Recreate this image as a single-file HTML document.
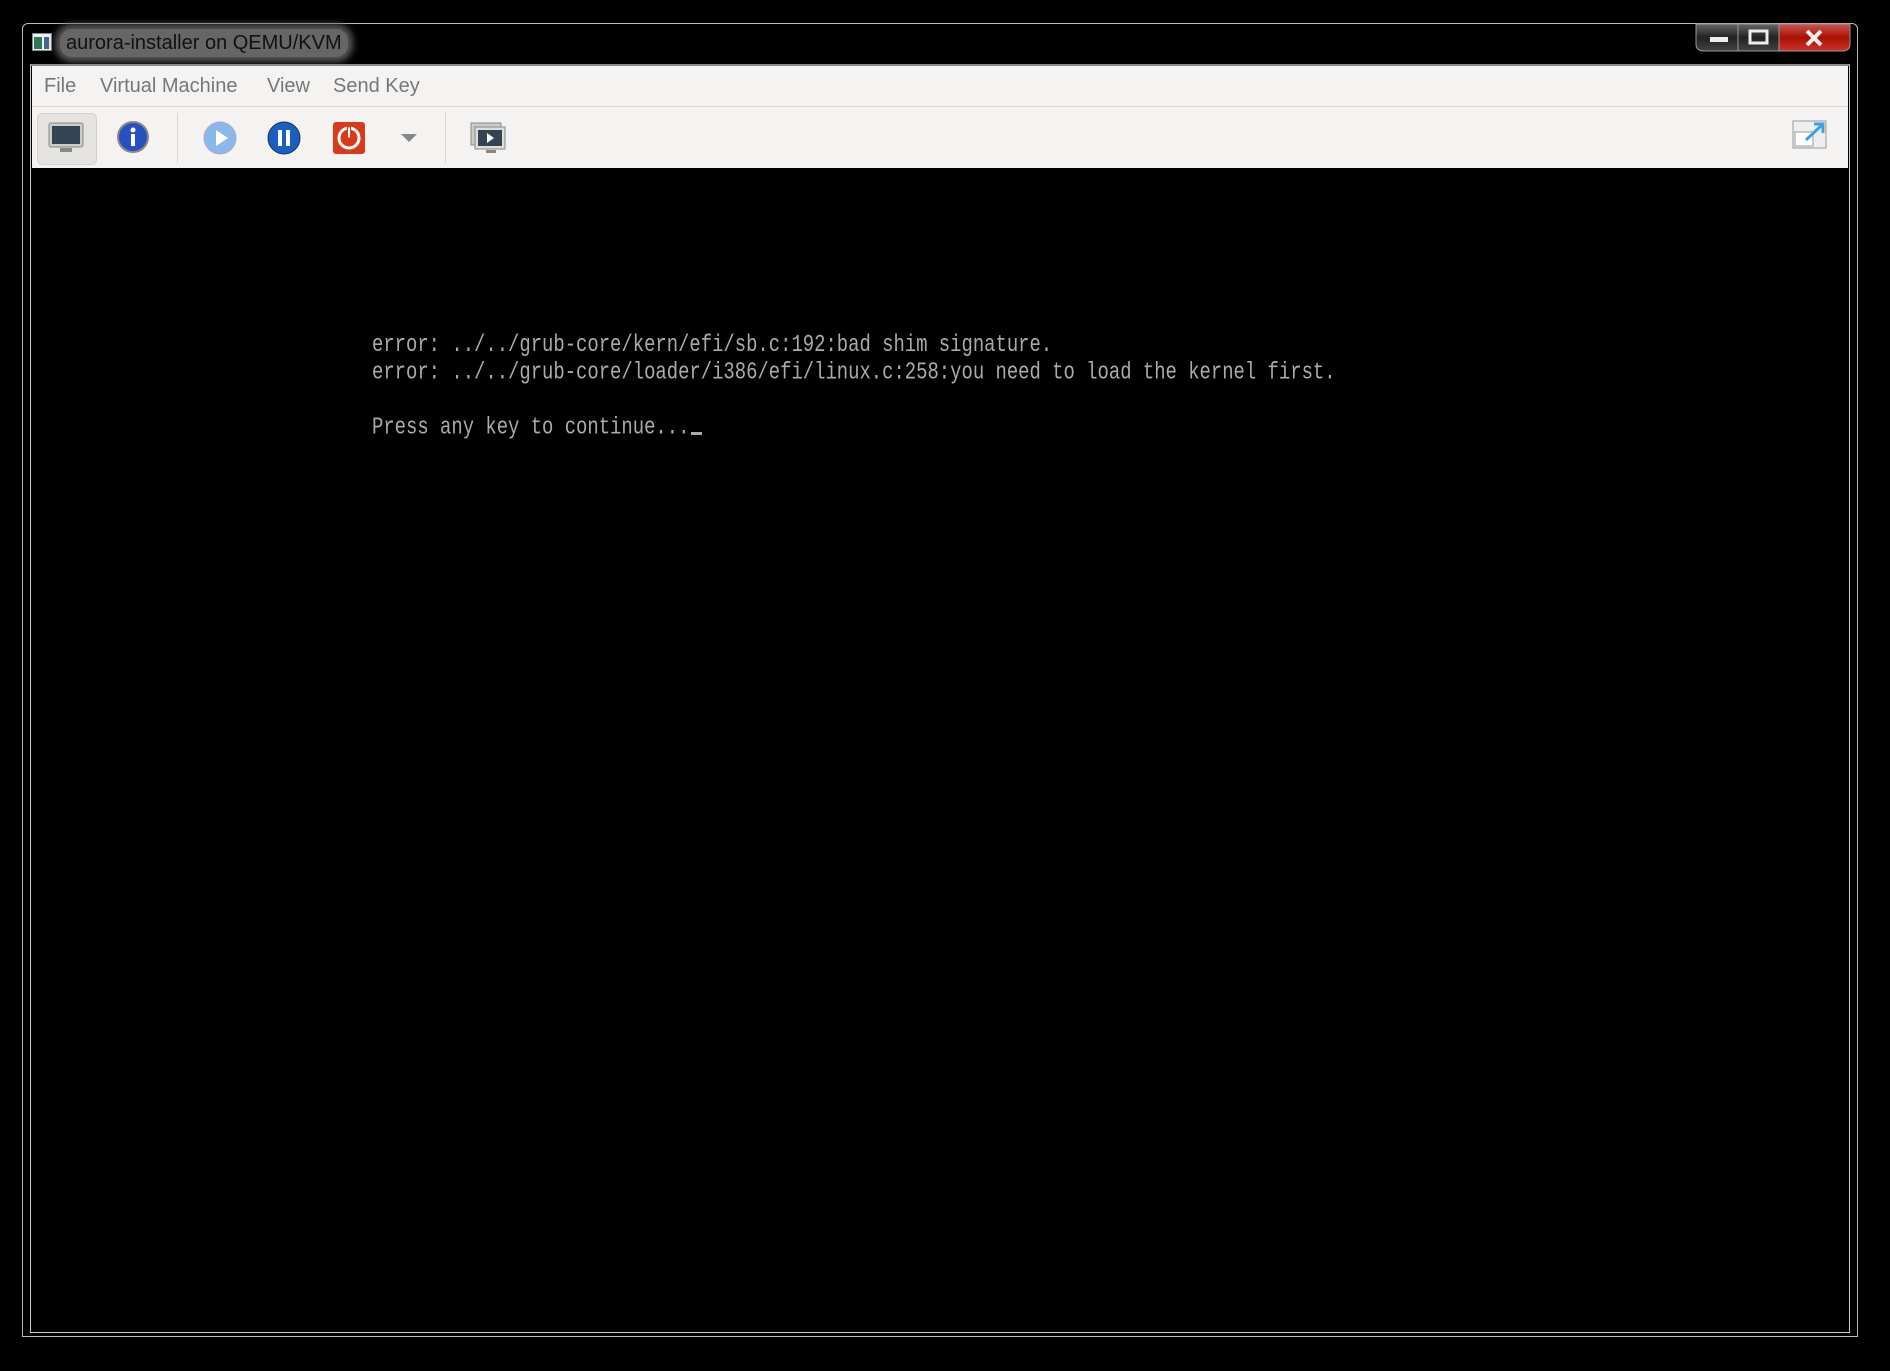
<!DOCTYPE html>
<html><head><style>
html,body{margin:0;padding:0;background:#000;width:1890px;height:1371px;overflow:hidden;font-family:"Liberation Sans","DejaVu Sans",sans-serif}
.abs{position:absolute}
.frame{left:22px;top:23px;width:1836px;height:1314px;border:1px solid #bbb;border-radius:6px 6px 0 0;box-sizing:border-box}
.title{left:60px;top:29px;height:28px;line-height:28px;font-size:20px;color:#111;padding:0 6px;background:#666;border-radius:12px;box-shadow:0 0 7px 5px #555}
.client{left:30px;top:64px;width:1820px;height:1269px;background:#000;border:1px solid #ccc;border-top:2px solid #888;box-sizing:border-box}
.menu{left:32px;top:66px;width:1816px;height:40px;background:#f4f3f1;border-bottom:1px solid #dcdad6}
.menu span{position:absolute;top:9px;font-size:20px;color:#777}
.tb{left:32px;top:107px;width:1816px;height:61px;background:#f4f3f1}
.sep{width:1px;height:50px;background:#d8d6d2;top:113px}
pre{position:absolute;margin:0;font-family:"Liberation Mono","DejaVu Sans Mono",monospace;font-size:18.9px;color:#aaa;transform:scaleY(1.25);transform-origin:0 0;letter-spacing:0}
</style></head><body>
<div class="abs frame"></div>
<svg class="abs" style="left:32px;top:33px" width="20" height="18"><rect x="0.5" y="0.5" width="19" height="17" fill="#eee" stroke="#888"/><rect x="2" y="4" width="8" height="12" fill="#2a7a5a"/><rect x="12" y="4" width="5" height="12" fill="#468"/></svg>
<div class="abs title">aurora-installer on QEMU/KVM</div>
<svg class="abs" style="left:1694px;top:22px" width="160" height="30">
<defs><linearGradient id="g1" x1="0" y1="0" x2="0" y2="1"><stop offset="0" stop-color="#666"/><stop offset=".5" stop-color="#222"/><stop offset="1" stop-color="#444"/></linearGradient>
<linearGradient id="g2" x1="0" y1="0" x2="0" y2="1"><stop offset="0" stop-color="#c55"/><stop offset=".5" stop-color="#a10"/><stop offset="1" stop-color="#c33"/></linearGradient></defs>
<path d="M2 2H85V29H10Q2 29 2 22Z" fill="url(#g1)" stroke="#999"/>
<path d="M85 2H156V22Q156 29 148 29H85Z" fill="url(#g2)" stroke="#999"/>
<line x1="44" y1="2" x2="44" y2="29" stroke="#999"/>
<rect x="16" y="15" width="18" height="5" fill="#eee"/>
<rect x="56" y="9" width="17" height="12" fill="none" stroke="#eee" stroke-width="3"/>
<path d="M113 9L127 23M127 9L113 23" stroke="#eee" stroke-width="4"/>
</svg>
<div class="abs client"></div>
<div class="abs menu">
<span style="left:12px">File</span><span style="left:68px">Virtual Machine</span><span style="left:235px">View</span><span style="left:301px">Send Key</span>
</div>
<div class="abs tb"></div>
<div class="abs" style="left:37px;top:113px;width:58px;height:50px;background:#e6e4e0;border:1px solid #d4d2ce;border-radius:5px"></div>
<svg class="abs" style="left:48px;top:121px" width="36" height="34"><rect x="1" y="2" width="34" height="24" rx="2" fill="#ccc" stroke="#888"/><rect x="4" y="5" width="28" height="18" fill="#345"/><rect x="12" y="27" width="12" height="4" fill="#888"/></svg>
<svg class="abs" style="left:116px;top:120px" width="34" height="34"><circle cx="17" cy="17" r="15" fill="#2850c0" stroke="#888" stroke-width="2"/><circle cx="17" cy="10" r="2.5" fill="#fff"/><rect x="15" y="14" width="4" height="12" fill="#fff"/></svg>
<div class="abs sep" style="left:177px"></div>
<svg class="abs" style="left:202px;top:120px" width="36" height="36"><circle cx="18" cy="18" r="16" fill="#8ab8ea" stroke="#aac" /><path d="M14 10L26 18L14 26Z" fill="#fff"/></svg>
<svg class="abs" style="left:266px;top:120px" width="36" height="36"><circle cx="18" cy="18" r="16" fill="#1a5ec0" stroke="#235"/><rect x="12" y="10" width="4" height="16" fill="#fff"/><rect x="20" y="10" width="4" height="16" fill="#fff"/></svg>
<svg class="abs" style="left:332px;top:121px" width="34" height="34"><rect x="1" y="1" width="32" height="32" rx="3" fill="#d93a1a"/><circle cx="17" cy="17" r="10" fill="none" stroke="#fff" stroke-width="3"/><rect x="15.5" y="6" width="3" height="11" fill="#fff" stroke="#d93a1a"/></svg>
<svg class="abs" style="left:399px;top:133px" width="20" height="10"><path d="M2 1H18L10 9Z" fill="#888"/></svg>
<div class="abs sep" style="left:445px"></div>
<svg class="abs" style="left:470px;top:122px" width="36" height="34"><rect x="1" y="1" width="30" height="22" fill="#ccc" stroke="#888"/><rect x="5" y="5" width="30" height="22" fill="#ddd" stroke="#888"/><rect x="8" y="8" width="24" height="16" fill="#345"/><path d="M17 11L24 16L17 21Z" fill="#fff"/><rect x="16" y="28" width="10" height="3" fill="#888"/></svg>
<svg class="abs" style="left:1792px;top:120px" width="36" height="30"><rect x="1" y="1" width="33" height="27" fill="#eee" stroke="#999"/><rect x="3" y="12" width="18" height="14" fill="#fff" stroke="#999"/><path d="M14 20L30 5M22 4H31V13" stroke="#3aa0e8" stroke-width="3" fill="none"/></svg>
<pre style="left:372px;top:331px">error: ../../grub-core/kern/efi/sb.c:192:bad shim signature.
error: ../../grub-core/loader/i386/efi/linux.c:258:you need to load the kernel first.

Press any key to continue...</pre>
<div class="abs" style="left:691px;top:432px;width:11px;height:3px;background:#aaa"></div>
</body></html>
